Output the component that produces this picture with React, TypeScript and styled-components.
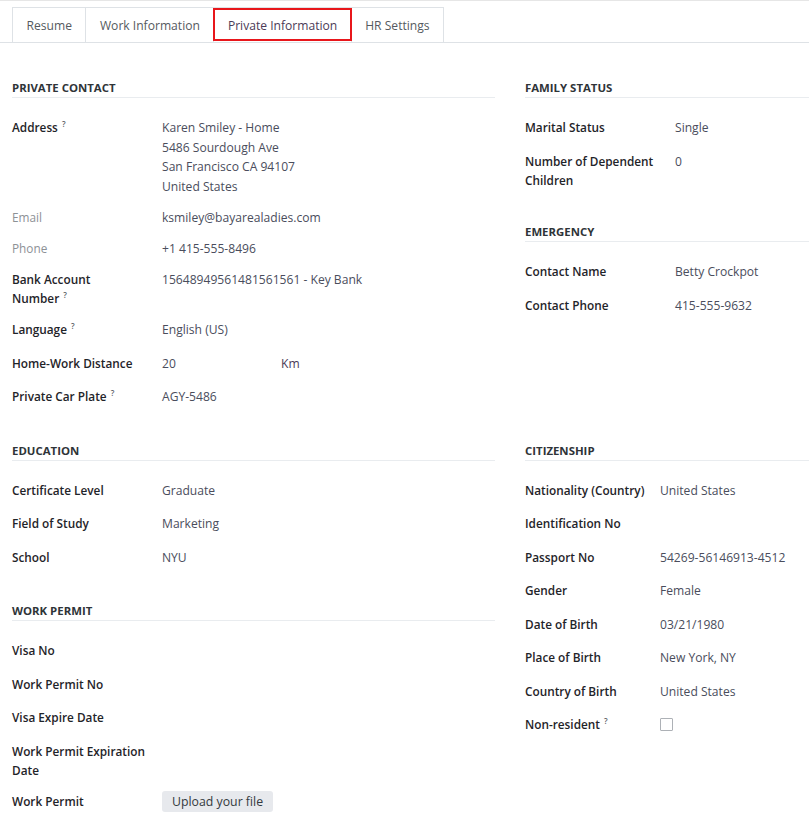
import React from "react";
import styled, { createGlobalStyle } from "styled-components";

const Global = createGlobalStyle`
  html, body { margin: 0; padding: 0; background: #ffffff; }
  body { font-family: "Open Sans", "Noto Sans", sans-serif; font-size: 12.1px; color: #212529; }
`;

const Sheet = styled.div`
  width: 809px;
  border-top: 1px solid #e6e6e6;
  padding-top: 6px;
  overflow: hidden;
`;

const TabBar = styled.div`
  display: flex;
  padding-left: 12px;
  border-bottom: 1px solid #dee2e6;
  height: 35px;
`;

const Tab = styled.div<{ $active?: boolean }>`
  display: flex;
  align-items: center;
  padding: 0 13.5px;
  height: 35px;
  box-sizing: border-box;
  border: 1px solid #dee2e6;
  border-left: none;
  border-bottom: none;
  margin-bottom: -1px;
  background: #ffffff;
  color: ${(p) => (p.$active ? "#4b3b57" : "#555a60")};
  font-size: 12.1px;
  position: relative;
  &:first-child { border-left: 1px solid #dee2e6; }
`;

const Highlight = styled.span`
  position: absolute;
  left: -1px;
  top: 0;
  right: -1px;
  bottom: 1px;
  border: 2px solid #e8161b;
  pointer-events: none;
`;

const Body = styled.div`
  display: grid;
  grid-template-columns: 483px 1fr;
  column-gap: 30px;
  padding: 15px 0 0 12px;
`;

const Column = styled.div`
  display: flex;
  flex-direction: column;
  min-width: 0;
`;

const SectionBox = styled.section`
  margin-top: 21px;
`;

const SectionTitle = styled.h3`
  margin: 0 0 20px 0;
  font-size: 11.4px;
  line-height: 18px;
  height: 18px;
  font-weight: 700;
  color: #2f3438;
  text-transform: uppercase;
  border-bottom: 1px solid #e9ecef;
`;

const Row = styled.div<{ $labelWidth: number }>`
  display: grid;
  grid-template-columns: ${(p) => p.$labelWidth}px 1fr;
  margin-bottom: 11.5px;
`;

const Label = styled.div<{ $muted?: boolean; $gap: number }>`
  font-size: 11.8px;
  line-height: 19.5px;
  font-weight: ${(p) => (p.$muted ? 400 : 600)};
  color: ${(p) => (p.$muted ? "#8d9196" : "#1f2429")};
  padding-right: ${(p) => p.$gap}px;
`;

const NoWrap = styled.span`
  white-space: nowrap;
`;

const Help = styled.span`
  display: inline-block;
  vertical-align: top;
  font-size: 8px;
  line-height: 12px;
  font-weight: 600;
  color: #5a5f66;
  margin-left: 4px;
`;

const Value = styled.div<{ $input?: boolean }>`
  font-size: 12.1px;
  line-height: 19.5px;
  color: #4a4d5c;
  min-height: ${(p) => (p.$input ? "22px" : "0")};
`;

const Line = styled.div``;

const Distance = styled.div`
  display: flex;
`;

const DistanceInput = styled.span`
  width: 119px;
`;

const Unit = styled.span`
  color: #4b3b57;
`;

const UploadButton = styled.button`
  font-family: "Open Sans", "Noto Sans", sans-serif;
  font-size: 12.3px;
  font-weight: 500;
  color: #343a40;
  background: #e7e9ed;
  border: none;
  border-radius: 3px;
  height: 21px;
  padding: 0 10px;
  line-height: 21px;
  margin-top: -1px;
`;

const Checkbox = styled.span`
  display: inline-block;
  width: 11px;
  height: 11px;
  border: 1px solid #adb1b6;
  border-radius: 1px;
  background: #fff;
  margin-top: 3px;
`;

type RowData = {
  label: string;
  help?: boolean;
  muted?: boolean;
  input?: boolean;
  value?: React.ReactNode;
};

type SectionData = { title: string; labelWidth?: number; labelGap?: number; rows: RowData[] };

const LabelText: React.FC<{ text: string; help?: boolean }> = ({ text, help }) => {
  if (!help) return <>{text}</>;
  const idx = text.lastIndexOf(" ");
  const head = idx >= 0 ? text.slice(0, idx + 1) : "";
  const last = idx >= 0 ? text.slice(idx + 1) : text;
  return (
    <>
      {head}
      <NoWrap>
        {last}
        <Help>?</Help>
      </NoWrap>
    </>
  );
};

const Section: React.FC<{ data: SectionData }> = ({ data }) => (
  <SectionBox>
    <SectionTitle>{data.title}</SectionTitle>
    {data.rows.map((r) => (
      <Row key={r.label} $labelWidth={data.labelWidth ?? 150}>
        <Label $muted={r.muted} $gap={data.labelGap ?? 16}>
          <LabelText text={r.label} help={r.help} />
        </Label>
        <Value $input={r.input}>{r.value}</Value>
      </Row>
    ))}
  </SectionBox>
);

const privateContact: SectionData = {
  title: "Private Contact",
  rows: [
    {
      label: "Address",
      help: true,
      value: (
        <>
          <Line>Karen Smiley - Home</Line>
          <Line>5486 Sourdough Ave</Line>
          <Line>San Francisco CA 94107</Line>
          <Line>United States</Line>
        </>
      ),
    },
    { label: "Email", muted: true, value: "ksmiley@bayarealadies.com" },
    { label: "Phone", muted: true, value: "+1 415-555-8496" },
    { label: "Bank Account Number", help: true, value: "15648949561481561561 - Key Bank" },
    { label: "Language", help: true, input: true, value: "English (US)" },
    {
      label: "Home-Work Distance",
      input: true,
      value: (
        <Distance>
          <DistanceInput>20</DistanceInput>
          <Unit>Km</Unit>
        </Distance>
      ),
    },
    { label: "Private Car Plate", help: true, input: true, value: "AGY-5486" },
  ],
};

const education: SectionData = {
  title: "Education",
  rows: [
    { label: "Certificate Level", input: true, value: "Graduate" },
    { label: "Field of Study", input: true, value: "Marketing" },
    { label: "School", input: true, value: "NYU" },
  ],
};

const workPermit: SectionData = {
  title: "Work Permit",
  rows: [
    { label: "Visa No", input: true },
    { label: "Work Permit No", input: true },
    { label: "Visa Expire Date", input: true },
    { label: "Work Permit Expiration Date", input: true },
    { label: "Work Permit", input: true, value: <UploadButton>Upload your file</UploadButton> },
  ],
};

const family: SectionData = {
  title: "Family Status",
  rows: [
    { label: "Marital Status", input: true, value: "Single" },
    { label: "Number of Dependent Children", input: true, value: "0" },
  ],
};

const emergency: SectionData = {
  title: "Emergency",
  rows: [
    { label: "Contact Name", input: true, value: "Betty Crockpot" },
    { label: "Contact Phone", input: true, value: "415-555-9632" },
  ],
};

const citizenship: SectionData = {
  title: "Citizenship",
  labelWidth: 135,
  labelGap: 6,
  rows: [
    { label: "Nationality (Country)", input: true, value: "United States" },
    { label: "Identification No", input: true },
    { label: "Passport No", input: true, value: "54269-56146913-4512" },
    { label: "Gender", input: true, value: "Female" },
    { label: "Date of Birth", input: true, value: "03/21/1980" },
    { label: "Place of Birth", input: true, value: "New York, NY" },
    { label: "Country of Birth", input: true, value: "United States" },
    { label: "Non-resident", help: true, input: true, value: <Checkbox /> },
  ],
};

export default function App() {
  return (
    <>
      <Global />
      <Sheet>
        <TabBar>
          <Tab>Resume</Tab>
          <Tab>Work Information</Tab>
          <Tab $active>
            Private Information
            <Highlight />
          </Tab>
          <Tab>HR Settings</Tab>
        </TabBar>
        <Body>
          <Column>
            <Section data={privateContact} />
          </Column>
          <Column>
            <Section data={family} />
            <Section data={emergency} />
          </Column>
          <Column>
            <Section data={education} />
            <Section data={workPermit} />
          </Column>
          <Column>
            <Section data={citizenship} />
          </Column>
        </Body>
      </Sheet>
    </>
  );
}
